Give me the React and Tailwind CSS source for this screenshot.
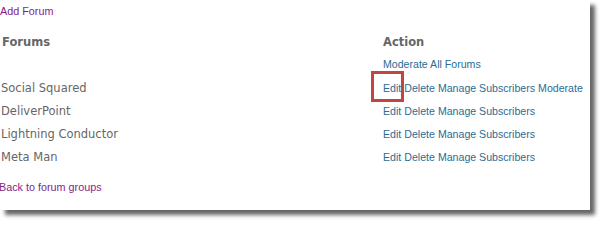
import React from "react"

const forums = [
    { name: "Social Squared", moderate: true },
    { name: "DeliverPoint" },
    { name: "Lightning Conductor" },
    { name: "Meta Man" },
]

export default function App() {
    return <div className="relative w-[605px] h-[225px] bg-white overflow-hidden">
        <div className="w-[590px] h-[210px] bg-white shadow-[5px_5px_4px_rgba(0,0,0,0.6)]">
            <div className="h-[22px] pt-[3px] text-[10.8px] text-[#7f1f86] font-['Liberation_Sans',sans-serif]">Add Forum</div>

            <div className="grid grid-cols-[383px_1fr] pt-[12px] text-[#666] font-['DejaVu_Sans',sans-serif] text-[11.5px] font-bold">
                <div className="pl-[2px]">Forums</div>
                <div>Action</div>
            </div>

            <div className="grid grid-cols-[383px_1fr] items-center h-[24px] mt-[2px]">
                <div></div>
                <div className="text-[10.6px] text-[#2b6c94] font-['Liberation_Sans',sans-serif] whitespace-nowrap">Moderate All Forums</div>
            </div>

            {forums.map((f) => (
                <div key={f.name} className="grid grid-cols-[383px_1fr] items-center h-[23px]">
                    <div className="text-[11.5px] text-[#666] font-['DejaVu_Sans',sans-serif] pl-[1px] whitespace-nowrap">{f.name}</div>
                    <div className="text-[10.6px] text-[#2b6c94] font-['Liberation_Sans',sans-serif] flex gap-[3px] whitespace-nowrap">
                        <span>Edit</span>
                        <span>Delete</span>
                        <span>Manage Subscribers</span>
                        {f.moderate && <span>Moderate</span>}
                    </div>
                </div>
            ))}

            <div className="pt-[10px] text-[10.8px] text-[#7f1f86] font-['Liberation_Sans',sans-serif] -ml-[1px]">Back to forum groups</div>
        </div>

        <div className="absolute left-[371px] top-[71px] w-[33px] h-[31px] border-[3px] border-[#c4443f]"></div>
    </div>
}
